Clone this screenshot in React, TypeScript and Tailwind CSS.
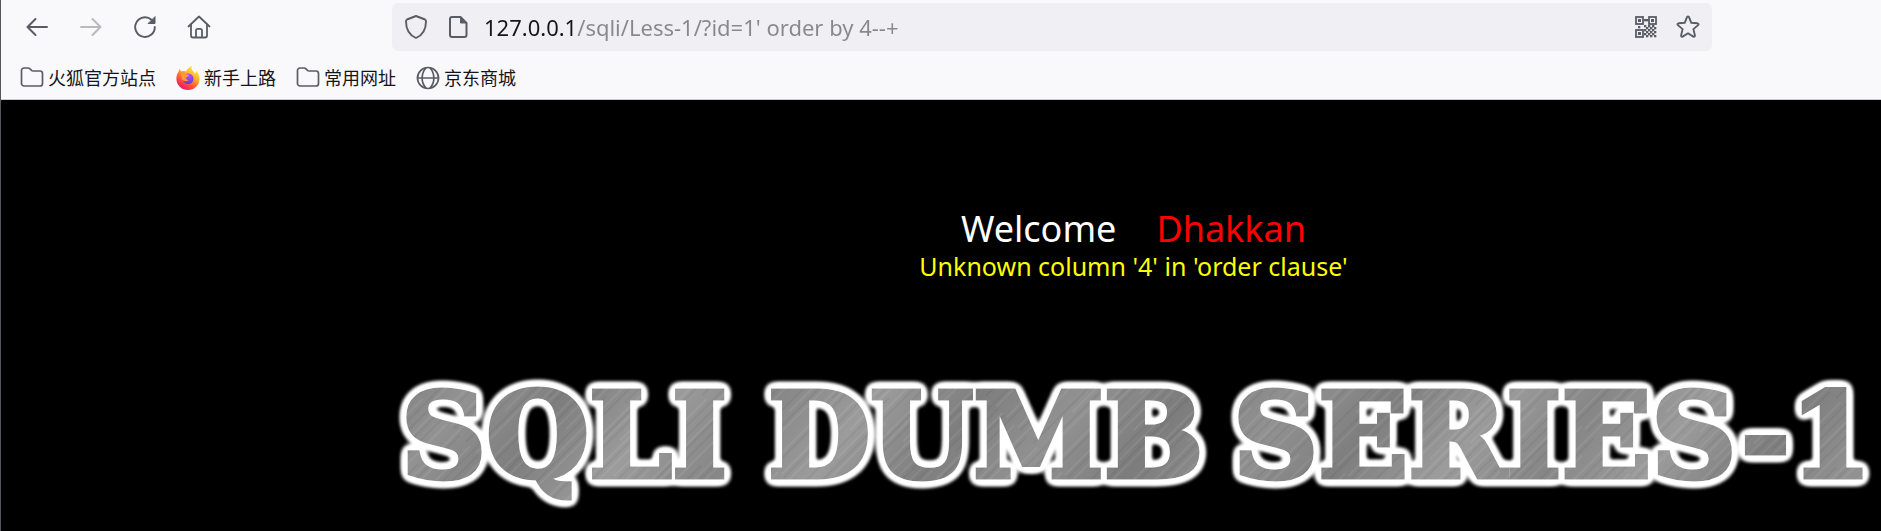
import type { ReactNode } from "react";

const stroke = {
  fill: "none",
  stroke: "currentColor",
  strokeLinecap: "round" as const,
  strokeLinejoin: "round" as const,
};

function BackIcon({ className = "" }: { className?: string }) {
  return (
    <svg viewBox="0 0 24 24" className={`size-6 ${className}`} {...stroke} strokeWidth="2" aria-hidden="true">
      <path d="M22 12H2.500M10.500 4l-8 8 8 8" />
    </svg>
  );
}

function ReloadIcon() {
  return (
    <svg viewBox="0 0 24 24" className="size-6" {...stroke} strokeWidth="1.900" aria-hidden="true">
      <path d="M18.500 4.800A9.800 9.800 0 1 0 21.800 12" />
      <path d="M22 2v6.500h-6.500z" fill="currentColor" strokeWidth="1" />
    </svg>
  );
}

function HomeIcon() {
  return (
    <svg viewBox="0 0 24 24" className="size-6" {...stroke} strokeWidth="1.800" aria-hidden="true">
      <path d="M1.500 11.500 12 1.500l10.500 10" />
      <path d="M4 9.500V20.500a2 2 0 0 0 2 2h12a2 2 0 0 0 2-2V9.500" />
      <path d="M9 22v-6.500a1.700 1.700 0 0 1 1.700-1.700h2.600a1.700 1.700 0 0 1 1.700 1.700V22" />
    </svg>
  );
}

function ShieldIcon() {
  return (
    <svg viewBox="0 0 24 24" className="size-6 shrink-0" {...stroke} strokeWidth="1.900" aria-hidden="true">
      <path d="M12 1 21 4.500Q22 5 22 6.200C22 14 19 20 12 23 5 20 2 14 2 6.200Q2 5 3 4.500Z" />
    </svg>
  );
}

function PageIcon() {
  return (
    <svg viewBox="0 0 24 24" className="size-6 shrink-0" {...stroke} strokeWidth="2" aria-hidden="true">
      <path d="M6 2h8.500L20.500 8v12a2 2 0 0 1-2 2H6a2 2 0 0 1-2-2V4a2 2 0 0 1 2-2z" />
      <path d="M14.500 2v6h6z" fill="currentColor" strokeWidth="1" />
    </svg>
  );
}

const finderMarks = [
  [1, 1],
  [14, 1],
  [1, 14],
];
const qrDots = [
  [10, 4], [12, 4], [4, 11], [10, 10], [12, 12], [14, 10], [16, 12], [18, 10], [20, 12], [10, 14],
  [12, 16], [14, 14], [16, 16], [18, 14], [20, 16], [14, 18], [16, 20], [18, 18], [20, 20], [12, 20], [10, 18],
];

function QrIcon() {
  return (
    <svg viewBox="0 0 24 24" className="size-6" fill="none" stroke="currentColor" aria-hidden="true">
      {finderMarks.map(([x, y]) => (
        <g key={`${x}-${y}`}>
          <rect x={x + 1} y={y + 1} width="7" height="7" strokeWidth="1.800" />
          <rect x={x + 3} y={y + 3} width="3" height="3" fill="currentColor" stroke="none" />
        </g>
      ))}
      {qrDots.map(([x, y]) => (
        <rect key={`${x}-${y}`} x={x} y={y} width="2.300" height="2.300" fill="currentColor" stroke="none" />
      ))}
    </svg>
  );
}

function StarIcon() {
  return (
    <svg viewBox="0 0 24 24" className="size-6" {...stroke} strokeWidth="1.900" aria-hidden="true">
      <path d="M11 2.100q1-1.500 2 0l2.300 5.700 6.200.5q1.700.4.6 1.800l-4.700 4 1.500 6.300q.1 1.800-1.600 1.200L12 18.200l-5.300 3.400q-1.700.6-1.600-1.200l1.500-6.300-4.700-4q-1.100-1.400.6-1.800l6.200-.5z" />
    </svg>
  );
}

function FolderIcon() {
  return (
    <svg viewBox="0 0 24 24" className="size-6" {...stroke} strokeWidth="1.700" aria-hidden="true">
      <path d="M1.500 4.500a2.500 2.500 0 0 1 2.500-2.500h4q1.200 0 2 .9l1.300 1.300q.7.8 2 .8H20a2.500 2.500 0 0 1 2.500 2.500v10a2.500 2.500 0 0 1-2.500 2.500H4a2.500 2.500 0 0 1-2.500-2.500z" />
    </svg>
  );
}

function GlobeIcon() {
  return (
    <svg viewBox="0 0 24 24" className="size-6" {...stroke} strokeWidth="1.700" aria-hidden="true">
      <circle cx="12" cy="12" r="10.500" />
      <path d="M1.500 12h21M10 1.800C4.800 8 4.800 16 10 22.200M14 1.800c5.200 6.200 5.200 14.200 0 20.400" />
    </svg>
  );
}

function FirefoxIcon() {
  return (
    <svg viewBox="0 0 24 24" className="size-6" aria-hidden="true">
      <defs>
        <linearGradient id="fox-body" x1="0.850" y1="0.050" x2="0.250" y2="1">
          <stop offset="0" stopColor="#fff14a" />
          <stop offset="0.350" stopColor="#ffb52e" />
          <stop offset="0.600" stopColor="#ff6a35" />
          <stop offset="0.850" stopColor="#fb2c50" />
          <stop offset="1" stopColor="#e31587" />
        </linearGradient>
        <radialGradient id="fox-globe" cx="0.600" cy="0.200" r="0.900">
          <stop offset="0" stopColor="#b14cf0" />
          <stop offset="1" stopColor="#5540c8" />
        </radialGradient>
      </defs>
      <path
        d="M16 0c-.8 2.300-.5 3.800 1 5 1 .8 1.400 1.700 1.700 2.700C21 6 20 4.500 20 4.500c2.200 2 3.600 5.200 3.600 8.200C23.600 19 18.500 24 12 24S.4 19 .4 12.700C.4 10 1.200 7.700 2.700 5.600L3.300 3l2.200 2.500c1.500-.6 3-.6 4.500 0C11 3 13.300.8 16 0z"
        fill="url(#fox-body)"
      />
      <circle cx="12.200" cy="12.800" r="5.300" fill="url(#fox-globe)" />
      <path d="M4.500 8.500C6 7 8.500 7 10 8.300c1.200.3 2.300.4 3 .7-.3 1.400-1.700 2-2.700 2.300-.8 1.700.5 2.800 2.200 2.700-1.500 2-5 1.500-6.200-.8z" fill="#ff9a2c" />
    </svg>
  );
}

function ToolButton({ label, children }: { label: string; children: ReactNode }) {
  return (
    <button type="button" aria-label={label} className="flex h-12 w-12 items-center justify-center text-[#5b5b66]">
      {children}
    </button>
  );
}

const bookmarks = [
  { label: "火狐官方站点", icon: <FolderIcon /> },
  { label: "新手上路", icon: <FirefoxIcon /> },
  { label: "常用网址", icon: <FolderIcon /> },
  { label: "京东商城", icon: <GlobeIcon /> },
];

function Banner() {
  return (
    <svg viewBox="0 0 1495 160" className="block w-full" role="img" aria-label="SQLI DUMB SERIES-1">
      <defs>
        <linearGradient id="steel" gradientUnits="userSpaceOnUse" x1="0" y1="0" x2="260" y2="200" spreadMethod="reflect">
          <stop offset="0" stopColor="#7c7c7c" />
          <stop offset="0.250" stopColor="#929292" />
          <stop offset="0.500" stopColor="#7e7e7e" />
          <stop offset="0.750" stopColor="#9c9c9c" />
          <stop offset="1" stopColor="#868686" />
        </linearGradient>
        <pattern id="scratches" width="67" height="200" patternUnits="userSpaceOnUse" patternTransform="rotate(45)">
          <path d="M3 0v130M9 60v140M20 0v90M24 80v120M33 0v200M41 20v100M52 0v150M61 90v110" stroke="#fff" strokeOpacity="0.130" />
          <path d="M6 0v110M13 0v200M28 50v150M37 0v80M46 70v130M57 0v200M64 0v60" stroke="#000" strokeOpacity="0.090" />
        </pattern>
        <pattern id="brushed" width="1495" height="160" patternUnits="userSpaceOnUse">
          <rect width="1495" height="160" fill="url(#steel)" />
          <rect width="1495" height="160" fill="url(#scratches)" />
        </pattern>
        <filter id="glow" filterUnits="userSpaceOnUse" x="0" y="0" width="1495" height="160">
          <feGaussianBlur in="SourceAlpha" stdDeviation="4" result="soft" />
          <feComponentTransfer in="soft" result="dense">
            <feFuncR type="linear" slope="0" intercept="1" />
            <feFuncG type="linear" slope="0" intercept="1" />
            <feFuncB type="linear" slope="0" intercept="1" />
            <feFuncA type="linear" slope="8" intercept="-0.100" />
          </feComponentTransfer>
          <feGaussianBlur in="dense" stdDeviation="1.300" result="halo" />
          <feMerge>
            <feMergeNode in="halo" />
            <feMergeNode in="halo" />
            <feMergeNode in="SourceGraphic" />
          </feMerge>
        </filter>
      </defs>
      <g
        filter="url(#glow)"
        fill="url(#brushed)"
        stroke="url(#brushed)"
        strokeWidth="5"
        className="font-['DejaVu_Serif',serif] text-[118px] font-bold"
      >
        <text x="15" y="115">SQLI</text>
        <text x="382" y="115">DUMB</text>
        <text x="847" y="115">SERIES-1</text>
      </g>
    </svg>
  );
}

export default function App() {
  return (
    <div className="flex min-h-screen flex-col border-l border-[#55555c] bg-black font-['Noto_Sans','Noto_Sans_CJK_SC',sans-serif]">
      <header className="border-b border-[#cccccf] bg-[#f9f9fb]">
        <nav className="flex items-center pt-[3px] pl-3" aria-label="Navigation">
          <div className="mr-[169px] flex gap-[6px]">
            <ToolButton label="Back"><BackIcon /></ToolButton>
            <ToolButton label="Forward"><BackIcon className="rotate-180 opacity-40" /></ToolButton>
            <ToolButton label="Reload"><ReloadIcon /></ToolButton>
            <ToolButton label="Home"><HomeIcon /></ToolButton>
          </div>
          <div className="mr-[169px] flex h-12 flex-1 items-center rounded-md bg-[#f0f0f4] pr-3 pl-3 text-[#5b5b66]">
            <ShieldIcon />
            <span className="ml-[18px] flex"><PageIcon /></span>
            <input
              type="text"
              aria-label="Address"
              defaultValue="127.0.0.1/sqli/Less-1/?id=1' order by 4--+"
              className="ml-[14px] h-12 min-w-0 flex-1 bg-[linear-gradient(to_right,#15141a_92px,#87878c_92px)] bg-clip-text text-[22px] text-transparent outline-none"
            />
            <button type="button" aria-label="QR code" className="mr-[18px]"><QrIcon /></button>
            <button type="button" aria-label="Bookmark this page"><StarIcon /></button>
          </div>
        </nav>
        <ul className="flex h-12 items-center gap-5 pt-[6px] pl-[19px]">
          {bookmarks.map((b) => (
            <li key={b.label}>
              <a href="#" className="flex items-center gap-1 text-[18px] leading-6 text-[#15141a]">
                <span className="text-[#5b5b66]">{b.icon}</span>
                {b.label}
              </a>
            </li>
          ))}
        </ul>
      </header>
      <main className="pt-[106px] pl-[385px]">
        <div className="flex flex-col items-center">
          <h1 className="flex gap-10 text-[36px] leading-[46px] text-white">
            <span>Welcome</span>
            <span className="text-[#ff0000]">Dhakkan</span>
          </h1>
          <p className="text-[25px] leading-7 text-[#ffff00]">Unknown column '4' in 'order clause'</p>
        </div>
        <div className="pt-[82px]">
          <Banner />
        </div>
      </main>
    </div>
  );
}
